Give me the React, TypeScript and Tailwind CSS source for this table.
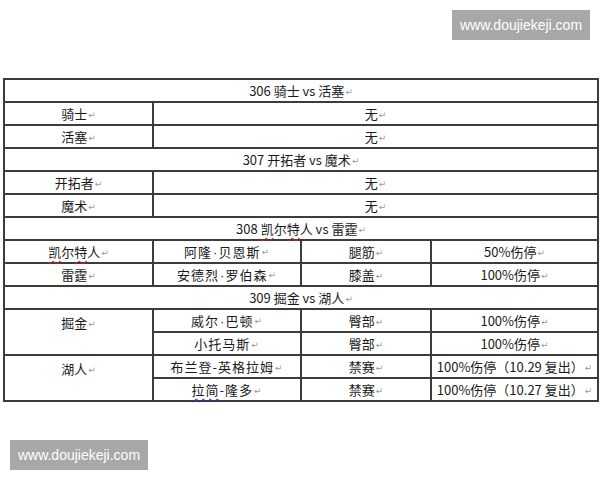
import React from "react";

const Mark = () => (
  <span className="text-[9px] text-[#9a9a9a] align-middle ml-[1px]" style={{ fontFamily: "'DejaVu Sans', sans-serif" }}>↵</span>
);

const Dot = () => (
  <span className="tracking-[0px] mx-[1px]" style={{ fontFamily: "'Liberation Sans', Arial, sans-serif" }}>·</span>
);

const Red = ({ children }: { children: React.ReactNode }) => (
  <span className="underline decoration-wavy decoration-[#d02020] decoration-1 underline-offset-[3px]">{children}</span>
);
const Blue = ({ children }: { children: React.ReactNode }) => (
  <span className="underline decoration-wavy decoration-[#2030c0] decoration-1 underline-offset-[3px]">{children}</span>
);

const td = "border-2 border-[#3c3c3c] text-center align-middle p-0 leading-none";

const Watermark = () => (
  <div
    className="w-[138px] h-[30px] bg-[#a8a8a8] text-white text-[14px] flex items-center justify-center"
    style={{ fontFamily: "'Liberation Sans', Arial, sans-serif" }}
  >
    www.doujiekeji.com
  </div>
);

export default function App() {
  return (
    <div
      className="w-[600px] h-[480px] bg-white text-[#1a1a1a] overflow-hidden"
      style={{ fontFamily: "'Noto Sans CJK SC', 'Noto Sans', sans-serif" }}
    >
      <div className="flex justify-end pt-[10px] pr-[10px]">
        <Watermark />
      </div>

      <table className="ml-[3px] mt-[38px] w-[594px] table-fixed border-collapse text-[13px]">
        <colgroup>
          <col className="w-[149px]" />
          <col className="w-[148px]" />
          <col className="w-[130px]" />
          <col className="w-[167px]" />
        </colgroup>
        <tbody>
          <tr className="h-[23px]">
            <td colSpan={4} className={td}>306 骑士 vs 活塞<Mark /></td>
          </tr>
          <tr className="h-[23px]">
            <td className={td}>骑士<Mark /></td>
            <td colSpan={3} className={td}>无<Mark /></td>
          </tr>
          <tr className="h-[23px]">
            <td className={td}>活塞<Mark /></td>
            <td colSpan={3} className={td}>无<Mark /></td>
          </tr>
          <tr className="h-[23px]">
            <td colSpan={4} className={td}>307 开拓者 vs 魔术<Mark /></td>
          </tr>
          <tr className="h-[23px]">
            <td className={td}>开拓者<Mark /></td>
            <td colSpan={3} className={td}>无<Mark /></td>
          </tr>
          <tr className="h-[23px]">
            <td className={td}>魔术<Mark /></td>
            <td colSpan={3} className={td}>无<Mark /></td>
          </tr>
          <tr className="h-[23px]">
            <td colSpan={4} className={td}>
              308 <Red>凯</Red>尔<Red>特</Red>人 vs 雷霆<Mark />
            </td>
          </tr>
          <tr className="h-[23px]">
            <td className={td}><Red>凯</Red>尔<Red>特</Red>人<Mark /></td>
            <td className={`${td} tracking-[1px]`}>阿隆<Dot />贝恩斯<Mark /></td>
            <td className={td}>腿筋<Mark /></td>
            <td className={td}>50%伤停<Mark /></td>
          </tr>
          <tr className="h-[23px]">
            <td className={td}>雷霆<Mark /></td>
            <td className={`${td} tracking-[1px]`}>安德烈<Dot />罗伯森<Mark /></td>
            <td className={td}>膝盖<Mark /></td>
            <td className={td}>100%伤停<Mark /></td>
          </tr>
          <tr className="h-[23px]">
            <td colSpan={4} className={td}>309 掘金 vs 湖人<Mark /></td>
          </tr>
          <tr className="h-[23px]">
            <td rowSpan={2} className={`${td} !align-top pt-[6px]`}>掘金<Mark /></td>
            <td className={`${td} tracking-[1px]`}>威尔<Dot />巴顿<Mark /></td>
            <td className={td}>臀部<Mark /></td>
            <td className={td}>100%伤停<Mark /></td>
          </tr>
          <tr className="h-[23px]">
            <td className={`${td} tracking-[1px]`}>小托马斯<Mark /></td>
            <td className={td}>臀部<Mark /></td>
            <td className={td}>100%伤停<Mark /></td>
          </tr>
          <tr className="h-[23px]">
            <td rowSpan={2} className={`${td} !align-top pt-[6px]`}>湖人<Mark /></td>
            <td className={`${td} tracking-[1px]`}>布兰登-英格拉姆<Mark /></td>
            <td className={td}>禁赛<Mark /></td>
            <td className={td}>100%伤停（10.29 复出）<Mark /></td>
          </tr>
          <tr className="h-[23px]">
            <td className={`${td} tracking-[1px]`}><Blue>拉简</Blue>-隆多<Mark /></td>
            <td className={td}>禁赛<Mark /></td>
            <td className={td}>100%伤停（10.27 复出）<Mark /></td>
          </tr>
        </tbody>
      </table>

      <div className="ml-[10px] mt-[38px]">
        <Watermark />
      </div>
    </div>
  );
}
